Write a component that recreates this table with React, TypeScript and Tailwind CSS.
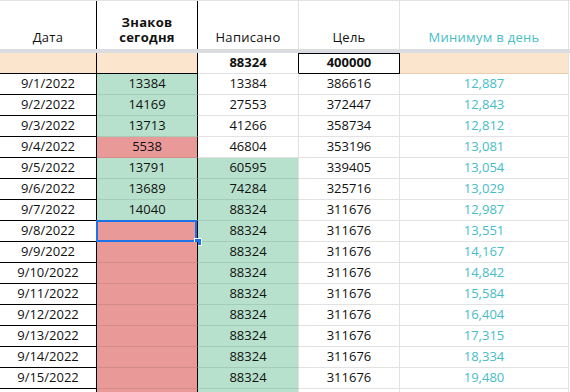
import React from 'react';

const colB = ['13384', '14169', '13713', '5538', '13791', '13689', '14040', '', '', '', '', '', '', '', '', ''];
const colC = ['13384', '27553', '41266', '46804', '60595', '74284', '88324', '88324', '88324', '88324', '88324', '88324', '88324', '88324', '88324', '88324'];
const colD = ['386616', '372447', '358734', '353196', '339405', '325716', '311676', '311676', '311676', '311676', '311676', '311676', '311676', '311676', '311676', '311676'];
const colE = ['12,887', '12,843', '12,812', '13,081', '13,054', '13,029', '12,987', '13,551', '14,167', '14,842', '15,584', '16,404', '17,315', '18,334', '19,480', '20,770'];

const cell = 'h-[21px] flex items-center justify-center border-b border-r';

export default function App() {
  return (
    <div
      className="w-[570px] h-[392px] overflow-hidden bg-white text-[13px] text-[#111]"
      style={{ fontFamily: '"Open Sans", "Liberation Sans", sans-serif' }}
    >
      {/* header row */}
      <div className="grid grid-cols-[97px_101px_101px_101px_169px_1fr] border-t border-[#e2e2e2] tracking-[0.3px]">
        <div className="h-[48px] flex items-end justify-center pb-[4px] border-r border-black leading-[15px]">Дата</div>
        <div className="h-[48px] flex flex-col items-center justify-end pb-[4px] border-r border-black leading-[15px] font-bold">
          <span>Знаков</span>
          <span>сегодня</span>
        </div>
        <div className="h-[48px] flex items-end justify-center pb-[4px] border-r border-[#e2e2e2] leading-[15px]">Написано</div>
        <div className="h-[48px] flex items-end justify-center pb-[4px] border-r border-[#e2e2e2] leading-[15px]">Цель</div>
        <div className="h-[48px] flex items-end justify-center pb-[4px] border-r border-[#e2e2e2] leading-[15px] text-[#46bdc6]">
          Минимум в день
        </div>
        <div />
      </div>

      {/* frozen divider */}
      <div className="h-[4px] bg-[#dadce0]" />

      {/* totals row */}
      <div className="grid grid-cols-[97px_101px_101px_101px_169px_1fr]">
        <div className={`${cell} bg-[#fce5cd] border-black`} />
        <div className={`${cell} bg-[#fce5cd] border-black`} />
        <div className={`${cell} border-b-[#e2e2e2] border-r-black font-bold`}>88324</div>
        <div className={`${cell} border-black font-bold shadow-[inset_0_1px_0_#000]`}>400000</div>
        <div className={`${cell} bg-[#fce5cd] border-b-[#e8cdb0] border-r-[#e2e2e2]`} />
        <div />
      </div>

      {/* data rows */}
      {colC.map((c, i) => {
        const green = colB[i] !== '' && i !== 3;
        const cGreen = i >= 4;
        const last = i === colC.length - 1; // only a sliver shows at the bottom edge
        return (
          <div key={i} className="grid grid-cols-[97px_101px_101px_101px_169px_1fr]">
            <div className={`${cell} border-black`}>{last ? '' : `9/${i + 1}/2022`}</div>
            <div
              className={`${cell} relative border-r-black ${
                green ? 'bg-[#b7e1cd] border-b-[#a5cbb9]' : 'bg-[#ea9999] border-b-[#d38a8a]'
              }`}
            >
              {colB[i]}
              {i === 7 && (
                <>
                  <div className="absolute -top-px -left-px right-0 -bottom-px border-2 border-[#1a73e8]" />
                  <div className="absolute -right-[5px] -bottom-[5px] w-[8px] h-[8px] bg-[#1a73e8] border border-white" />
                </>
              )}
            </div>
            <div
              className={`${cell} border-r-[#e2e2e2] ${
                cGreen ? 'bg-[#b7e1cd] border-b-[#a5cbb9]' : 'border-b-[#e2e2e2]'
              }`}
            >
              {last ? '' : c}
            </div>
            <div className={`${cell} border-[#e2e2e2]`}>{last ? '' : colD[i]}</div>
            <div className={`${cell} border-[#e2e2e2] text-[#46bdc6]`}>{last ? '' : colE[i]}</div>
            <div />
          </div>
        );
      })}
    </div>
  );
}
